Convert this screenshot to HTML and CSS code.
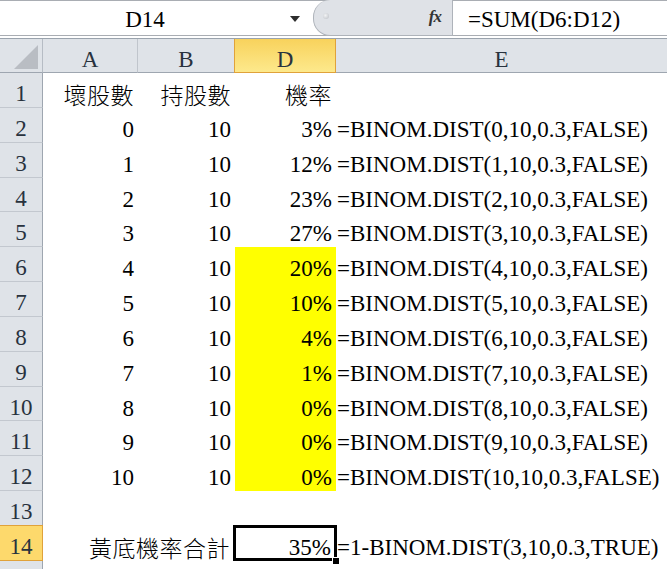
FILE: index.html
```html
<!DOCTYPE html>
<html>
<head>
<meta charset="utf-8">
<title>Sheet</title>
<link rel="stylesheet" href="styles.css">
</head>
<body>
<div class="fbar">
  <div class="namebox"><span class="nb-text">D14</span><span class="nb-arrow"></span></div>
  <div class="pill"><span class="dot"></span><span class="fx">fx</span></div>
  <div class="finput">=SUM(D6:D12)</div>
</div>
<div class="sheet">
  <div class="corner"><svg width="43" height="34" viewBox="0 0 43 34"><polygon points="14,30 38,30 38,6" fill="#b9bdc3"/></svg></div>
  <div class="ch">A</div><div class="ch">B</div><div class="ch sel">D</div><div class="ch last">E</div>

  <div class="rh">1</div><div class="c r"><span class="cjk">壞股數</span></div><div class="c r"><span class="cjk">持股數</span></div><div class="c r"><span class="cjk">機率</span></div><div class="c"></div>
  <div class="rh">2</div><div class="c r">0</div><div class="c r">10</div><div class="c r">3%</div><div class="c e">=BINOM.DIST(0,10,0.3,FALSE)</div>
  <div class="rh">3</div><div class="c r">1</div><div class="c r">10</div><div class="c r">12%</div><div class="c e">=BINOM.DIST(1,10,0.3,FALSE)</div>
  <div class="rh">4</div><div class="c r">2</div><div class="c r">10</div><div class="c r">23%</div><div class="c e">=BINOM.DIST(2,10,0.3,FALSE)</div>
  <div class="rh">5</div><div class="c r">3</div><div class="c r">10</div><div class="c r">27%</div><div class="c e">=BINOM.DIST(3,10,0.3,FALSE)</div>
  <div class="rh">6</div><div class="c r">4</div><div class="c r">10</div><div class="c r y">20%</div><div class="c e">=BINOM.DIST(4,10,0.3,FALSE)</div>
  <div class="rh">7</div><div class="c r">5</div><div class="c r">10</div><div class="c r y">10%</div><div class="c e">=BINOM.DIST(5,10,0.3,FALSE)</div>
  <div class="rh">8</div><div class="c r">6</div><div class="c r">10</div><div class="c r y">4%</div><div class="c e">=BINOM.DIST(6,10,0.3,FALSE)</div>
  <div class="rh">9</div><div class="c r">7</div><div class="c r">10</div><div class="c r y">1%</div><div class="c e">=BINOM.DIST(7,10,0.3,FALSE)</div>
  <div class="rh">10</div><div class="c r">8</div><div class="c r">10</div><div class="c r y">0%</div><div class="c e">=BINOM.DIST(8,10,0.3,FALSE)</div>
  <div class="rh">11</div><div class="c r">9</div><div class="c r">10</div><div class="c r y">0%</div><div class="c e">=BINOM.DIST(9,10,0.3,FALSE)</div>
  <div class="rh">12</div><div class="c r">10</div><div class="c r">10</div><div class="c r y">0%</div><div class="c e">=BINOM.DIST(10,10,0.3,FALSE)</div>
  <div class="rh">13</div><div class="c"></div><div class="c"></div><div class="c"></div><div class="c"></div>
  <div class="rh rsel">14</div><div class="c"></div><div class="c r over"><span class="cjk">黃底機率合計</span></div><div class="c r active">35%<span class="handle"></span></div><div class="c e">=1-BINOM.DIST(3,10,0.3,TRUE)</div>
  <div class="rh"></div><div class="c"></div><div class="c"></div><div class="c"></div><div class="c"></div>
</div>
</body>
</html>
```

FILE: styles.css
```css
html, body {
  margin: 0;
  padding: 0;
  background: #ffffff;
  overflow: hidden;
}
body {
  width: 667px;
  height: 569px;
  font-family: "Liberation Serif", "Times New Roman", serif;
  font-size: 23px;
  color: #000;
}
.cjk {
  font-family: "Noto Sans CJK TC", sans-serif;
  font-size: 23px;
  font-weight: 300;
  letter-spacing: 0.5px;
}

/* formula bar */
.fbar {
  display: flex;
  height: 36px;
  box-sizing: border-box;
  border-top: 1px solid #a9adb3;
  border-bottom: 1px solid #a9adb3;
}
.namebox {
  width: 313px;
  display: flex;
  align-items: flex-start;
}
.nb-text {
  width: 290px;
  text-align: center;
  padding-top: 5px;
  line-height: 27px;
}
.nb-arrow {
  width: 0;
  height: 0;
  margin-top: 15px;
  border-left: 5px solid transparent;
  border-right: 5px solid transparent;
  border-top: 6px solid #2d2d2d;
}
.pill {
  width: 140px;
  box-sizing: border-box;
  background: #dfe2e7;
  border: 1px solid #aeb3ba;
  border-top: none;
  border-radius: 17px 0 0 17px;
  margin-top: -1px;
  margin-bottom: -1px;
  display: flex;
  align-items: center;
  justify-content: space-between;
  padding: 0 11px 0 9px;
}
.dot {
  width: 6px;
  height: 6px;
  border-radius: 50%;
  background: radial-gradient(circle at 40% 40%, #f2f3f5, #b9bdc3);
  margin-top: -3px;
}
.fx {
  font-style: italic;
  font-weight: bold;
  font-size: 17px;
  color: #333;
  letter-spacing: -1px;
  margin-top: -2px;
}
.finput {
  flex: 1;
  padding-left: 15px;
  padding-top: 5px;
  line-height: 27px;
  white-space: nowrap;
}

/* sheet */
.sheet {
  margin-top: 2px;
  border-top: 1px solid #9aa3ad;
  display: grid;
  grid-template-columns: 43px 95px 97px 101px 1fr;
  grid-template-rows: 34px repeat(15, 34.85px);
}
.corner {
  background: #dfe3e8;
  border-right: 1px solid #b6bcc4;
  border-bottom: 1px solid #9ea6b0;
  box-sizing: border-box;
}
.corner svg { display: block; }
.ch {
  background: #dfe3e8;
  border-right: 1px solid #c0c5cc;
  border-bottom: 1px solid #9ea6b0;
  box-sizing: border-box;
  text-align: center;
  padding-top: 7px;
  line-height: 27px;
  color: #28323e;
}
.ch.last { border-right: none; }
.ch.sel {
  background: linear-gradient(#f8d25c, #fde98c);
  border: 1px solid #e0a23a;
  border-top: none;
  margin-left: -1px;
}
.rh {
  background: #dfe3e8;
  border-right: 1px solid #9ea6b0;
  border-bottom: 1px solid #c3c8cf;
  box-sizing: border-box;
  text-align: center;
  padding-top: 7px;
  line-height: 27px;
  color: #28323e;
}
.rh.rsel {
  background: #fdd96c;
  border: 1px solid #e0a23a;
  border-left: none;
  margin-top: -1px;
}
.c {
  box-sizing: border-box;
  padding: 8px 4px 0 4px;
  line-height: 27px;
  white-space: nowrap;
}
.c.r {
  display: flex;
  justify-content: flex-end;
}
.c.e {
  padding-left: 1px;
  overflow: visible;
}
.c.y { background: #ffff00; }
.c.over { padding-right: 5px; }
.c.active {
  position: relative;
  padding-right: 5px;
}
.c.active::after {
  content: "";
  position: absolute;
  left: -2px;
  top: -1px;
  right: -1px;
  bottom: 0;
  border: 3px solid #000;
}
.handle {
  position: absolute;
  right: -4px;
  bottom: -4px;
  width: 6px;
  height: 6px;
  background: #000;
  border: 1px solid #fff;
  z-index: 2;
}
```
